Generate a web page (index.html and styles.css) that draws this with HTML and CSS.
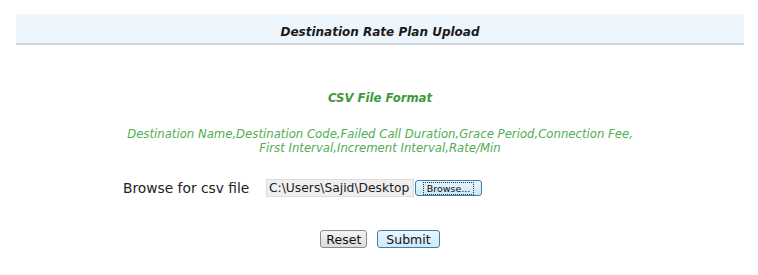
FILE: index.html
```html
<!DOCTYPE html>
<html lang="en">
<head>
  <meta charset="UTF-8">
  <meta name="viewport" content="width=device-width, initial-scale=1.0">
  <title>Destination Rate Plan Upload</title>
  <link rel="stylesheet" href="styles.css">
</head>
<body>
  <div class="page">
    <div class="header">Destination Rate Plan Upload</div>

    <div class="format-title">CSV File Format</div>
    <div class="format-text">
      Destination Name,Destination Code,Failed Call Duration,Grace Period,Connection Fee,<br>
      First Interval,Increment Interval,Rate/Min
    </div>

    <div class="browse-row">
      <label class="browse-label">Browse for csv file</label>
      <div class="file-box">
        <span class="file-path">C:\Users\Sajid\Desktop</span>
        <button class="btn btn-browse"><span class="focus">Browse...</span></button>
      </div>
    </div>

    <div class="actions">
      <button class="btn">Reset</button>
      <button class="btn btn-primary">Submit</button>
    </div>
  </div>
</body>
</html>
```

FILE: styles.css
```css
body {
  margin: 0;
  background: #ffffff;
  font-family: "DejaVu Sans", Verdana, sans-serif;
  color: #222;
}
.page {
  padding: 14px 14px 0 16px;
}
.header {
  background: #eef6fd;
  border-bottom: 2px solid #d3d7db;
  height: 29px;
  line-height: 36px;
  overflow: hidden;
  text-align: center;
  font-size: 12px;
  font-weight: bold;
  font-style: italic;
  color: #1a1a1a;
}
.format-title {
  margin-top: 46px;
  text-align: center;
  font-size: 11.7px;
  font-weight: bold;
  font-style: italic;
  color: #3d9a3d;
}
.format-text {
  margin-top: 22px;
  text-align: center;
  font-size: 11.7px;
  line-height: 14px;
  font-style: italic;
  color: #4fae4f;
}
.browse-row {
  display: flex;
  align-items: center;
  margin-top: 24px;
  padding-left: 107px;
}
.browse-label {
  font-size: 13.8px;
  color: #222;
  width: 143px;
}
.file-box {
  display: flex;
  align-items: center;
  gap: 1px;
}
.file-path {
  background: #efefef;
  border: 1px solid #dcdcdc;
  font-size: 12.3px;
  height: 16px;
  line-height: 16px;
  padding: 0 2px;
  width: 142px;
  overflow: hidden;
  white-space: nowrap;
  color: #222;
}
.btn {
  font-family: "DejaVu Sans", Verdana, sans-serif;
  font-size: 12.5px;
  color: #111;
  background: linear-gradient(#f4f4f4, #dcdcdc);
  border: 1px solid #8c8c8c;
  border-radius: 3px;
  padding: 0 5px;
  height: 18px;
  line-height: 15px;
}
.btn-browse {
  border-color: #3c7fb1;
  background: linear-gradient(#eaf6fd, #c9e6f9);
  padding: 1px 2px;
  width: 67px;
  height: 16px;
  font-size: 9.5px;
  line-height: 11px;
}
.focus {
  border: 1px dotted #333;
  padding: 0 3px;
}
.btn-primary {
  border-color: #3c7fb1;
  background: linear-gradient(#eaf6fd, #cfe8f8);
  padding: 0 8px;
}
.actions {
  display: flex;
  justify-content: center;
  gap: 10px;
  margin-top: 33px;
}
```
